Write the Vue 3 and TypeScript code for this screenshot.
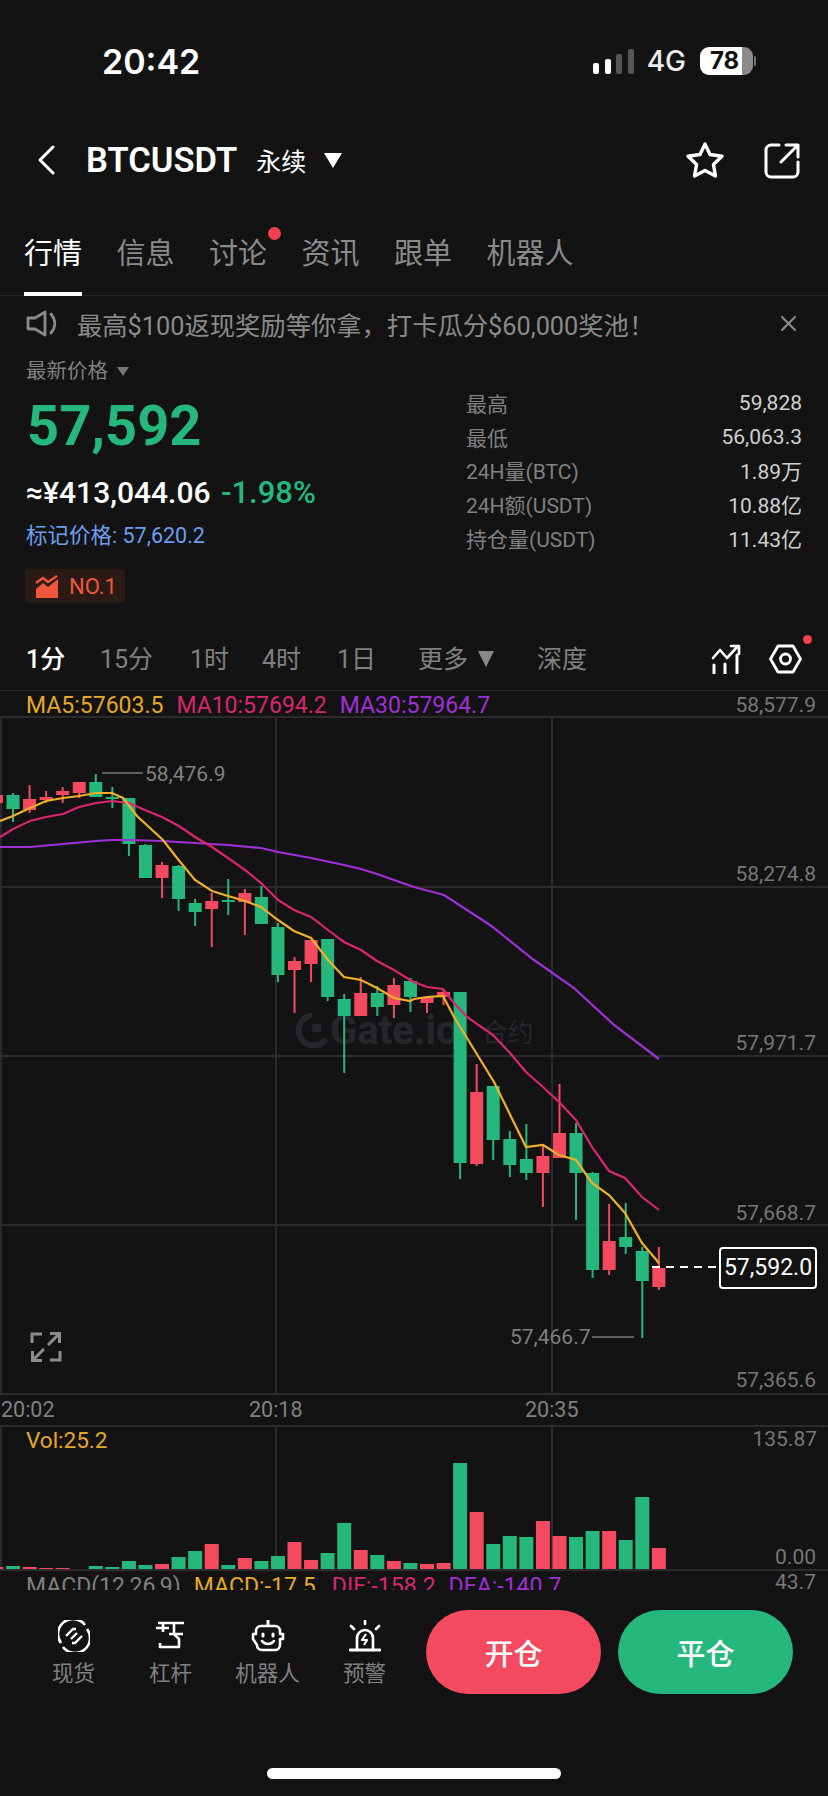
<template>
  <div class="screen">
    <div class="status">
      <span class="clock">20:42</span>
      <div class="status-right">
        <div class="signal">
          <i class="on" style="height: 11px"></i>
          <i class="on" style="height: 15px"></i>
          <i style="height: 20px"></i>
          <i style="height: 25px"></i>
        </div>
        <span class="net">4G</span>
        <div class="battery">78</div>
        <div class="nub"></div>
      </div>
    </div>

    <div class="header">
      <svg class="back" width="20" height="30" viewBox="0 0 20 30" fill="none">
        <path d="M17 2 L4 15 L17 28" stroke="#fff" stroke-width="3" stroke-linecap="round" stroke-linejoin="round" />
      </svg>
      <span class="symbol">BTCUSDT</span>
      <span class="kind">永续</span>
      <span class="tri tri-white"></span>
      <div class="header-actions">
        <svg width="40" height="38" viewBox="0 0 40 38" fill="none">
          <path d="M20 3 L25 13.5 L37 15.2 L28.4 23.4 L30.5 35 L20 29.4 L9.5 35 L11.6 23.4 L3 15.2 L15 13.5 Z" stroke="#fff" stroke-width="3.4" stroke-linejoin="round" />
        </svg>
        <svg width="36" height="37" viewBox="0 0 36 37" fill="none">
          <path d="M15 3 H7 A5 5 0 0 0 2 8 V30 A5 5 0 0 0 7 35 H29 A5 5 0 0 0 34 30 V20" stroke="#fff" stroke-width="3" stroke-linecap="round" />
          <path d="M17 20 L33 4 M22 3 H34 V15" stroke="#fff" stroke-width="3" stroke-linecap="round" stroke-linejoin="round" />
        </svg>
      </div>
    </div>

    <div class="tabs">
      <div v-for="(tab, i) in tabs" :key="tab" class="tab" :class="{ active: i === 0 }">
        {{ tab }}
        <span v-if="tab === '讨论'" class="tab-dot"></span>
      </div>
    </div>

    <div class="notice">
      <svg width="31" height="27" viewBox="0 0 31 27" fill="none">
        <path d="M2 8 H9 L19 2 V25 L9 19 H2 Z" stroke="#8a8a8a" stroke-width="2.8" stroke-linejoin="round" />
        <path d="M25 4 C30 10 30 17 25 23" stroke="#8a8a8a" stroke-width="2.8" stroke-linecap="round" />
      </svg>
      <span class="notice-text">最高$100返现奖励等你拿，打卡瓜分$60,000奖池！</span>
      <svg class="close" width="17" height="17" viewBox="0 0 17 17" fill="none">
        <path d="M2 2 L15 15 M15 2 L2 15" stroke="#8a8a8a" stroke-width="2.2" stroke-linecap="round" />
      </svg>
    </div>

    <div class="market">
      <div class="market-left">
        <div class="latest-label">最新价格 <span class="tri tri-small"></span></div>
        <div class="last-price">57,592</div>
        <div class="cny">≈¥413,044.06 <span class="change">-1.98%</span></div>
        <div class="mark-price">标记价格: 57,620.2</div>
        <div class="rank">
          <svg width="24" height="23" viewBox="0 0 24 23">
            <path d="M1 14 L8 8 L13 12 L23 4 V23 H1 Z" fill="#f0573a" />
            <path d="M1 8 L8 3 L13 7 L22 1" fill="none" stroke="#f0573a" stroke-width="2.4" />
          </svg>
          <span>NO.1</span>
        </div>
      </div>
      <div class="market-right">
        <div v-for="row in stats" :key="row[0]" class="stat">
          <span class="stat-label">{{ row[0] }}</span>
          <span class="stat-value">{{ row[1] }}</span>
        </div>
      </div>
    </div>

    <div class="intervals">
      <span class="iv active" style="width: 74px">1分</span>
      <span class="iv" style="width: 90px">15分</span>
      <span class="iv" style="width: 72px">1时</span>
      <span class="iv" style="width: 75px">4时</span>
      <span class="iv" style="width: 81px">1日</span>
      <span class="iv">更多</span>
      <span class="tri tri-gray"></span>
      <span class="iv depth">深度</span>
      <div class="iv-icons">
        <svg width="30" height="30" viewBox="0 0 30 30" fill="none">
          <path d="M2 14 L9 6 L16 14 L27 2 M20 2 H28 V10" stroke="#fff" stroke-width="2.6" stroke-linejoin="round" stroke-linecap="round" />
          <path d="M3 21 V29 M14 20 V29 M26 11 V29" stroke="#fff" stroke-width="3" stroke-linecap="round" />
        </svg>
        <div class="gear">
          <svg width="33" height="30" viewBox="0 0 33 30" fill="none">
            <path d="M9 2 H24 L31.5 15 L24 28 H9 L1.5 15 Z" stroke="#fff" stroke-width="2.8" stroke-linejoin="round" />
            <circle cx="16.5" cy="15" r="5" stroke="#fff" stroke-width="2.8" />
          </svg>
          <span class="gear-dot"></span>
        </div>
      </div>
    </div>

    <div class="ma-row">
      <span class="ma5">MA5:57603.5</span>
      <span class="ma10">MA10:57694.2</span>
      <span class="ma30">MA30:57964.7</span>
      <span class="axis-top">58,577.9</span>
    </div>

    <div class="main-chart">
      <div class="watermark">
        <svg width="35" height="35" viewBox="0 0 35 35" fill="none">
          <path d="M31 26 A15 15 0 1 1 17.5 2.5" stroke="#25262b" stroke-width="6" />
          <path d="M17.5 11 V19 H26 V11 Z" fill="#25262b" />
        </svg>
        <span class="wm-name">Gate.io</span>
        <span class="wm-kind">合约</span>
      </div>
      <svg class="plot" width="828" height="675" viewBox="0 718 828 675">
        <line v-for="y in [887, 1056, 1225]" :key="y" x1="0" x2="828" :y1="y" :y2="y" class="grid" />
        <line v-for="x in [1, 276, 552]" :key="x" :x1="x" :x2="x" y1="718" y2="1393" class="grid" />
        <g v-for="c in candleBars" :key="c.x">
          <rect :x="c.x - 1" :y="c.high" width="2" :height="c.low - c.high" :fill="c.color" />
          <rect :x="c.x - 6.5" :y="c.top" width="13" :height="c.bottom - c.top" :fill="c.color" />
        </g>
        <polyline :points="ma30Points" fill="none" stroke="#a02fd6" stroke-width="2.2" />
        <polyline :points="ma10Points" fill="none" stroke="#d9266f" stroke-width="2.2" />
        <polyline :points="ma5Points" fill="none" stroke="#eeb02a" stroke-width="2.2" />
        <line x1="102" x2="143" y1="773" y2="773" class="marker" />
        <line x1="592" x2="634" y1="1337" y2="1337" class="marker" />
        <line x1="652" x2="719" y1="1267" y2="1267" stroke="#fff" stroke-width="2" stroke-dasharray="8 6" />
      </svg>
      <span v-for="a in axisLabels" :key="a.text" class="axis" :style="{ top: a.top + 'px' }">{{ a.text }}</span>
      <span class="hl high-label">58,476.9</span>
      <span class="hl low-label">57,466.7</span>
      <div class="now-price">57,592.0</div>
      <svg class="expand" width="32" height="32" viewBox="0 0 32 32" fill="none">
        <path d="M2 12 V3 H12 M20 29 H30 V20" stroke="#8d8d8d" stroke-width="3" />
        <path d="M18 14 L29 3 M20 2.5 H29.5 V12 M14 18 L3 29 M2.5 20 V29.5 H12" stroke="#8d8d8d" stroke-width="3" />
      </svg>
    </div>

    <div class="time-axis">
      <span class="t0">20:02</span>
      <span class="t1">20:18</span>
      <span class="t2">20:35</span>
    </div>

    <div class="vol-chart">
      <svg class="plot" width="828" height="142" viewBox="0 1427 828 142">
        <line v-for="x in [1, 276, 552]" :key="x" :x1="x" :x2="x" y1="1427" y2="1569" class="grid" />
        <rect v-for="b in volumeBars" :key="b.x" :x="b.x - 7" :y="b.top" width="14" :height="1569.5 - b.top" :fill="b.color" />
      </svg>
      <span class="vol-label">Vol:25.2</span>
      <span class="vol-max">135.87</span>
      <span class="vol-min">0.00</span>
    </div>

    <div class="macd-row">
      <span class="m-name">MACD(12,26,9)</span>
      <span class="m-macd">MACD:-17.5</span>
      <span class="m-dif">DIF:-158.2</span>
      <span class="m-dea">DEA:-140.7</span>
      <span class="m-val">43.7</span>
    </div>

    <div class="bottom">
      <div class="nav">
        <div class="nav-item">
          <svg width="32" height="32" viewBox="0 0 32 32" fill="none">
            <path d="M27 5 A15 15 0 0 0 3 23 M5 27 A15 15 0 0 0 29 9" stroke="#fff" stroke-width="2.6" />
            <path d="M8 16 L15 9 H18 M24 16 L17 23 H14 M13 19 L19 13" stroke="#fff" stroke-width="2.4" />
          </svg>
          <span>现货</span>
        </div>
        <div class="nav-item">
          <svg width="30" height="32" viewBox="0 0 30 32" fill="none">
            <path d="M2 3 H28 M7 3 V12 M0 8 H13 M18 3 V14 M13 14 H27" stroke="#fff" stroke-width="2.6" />
            <path d="M18 14 L23 19 V27 H4 V23" stroke="#fff" stroke-width="2.6" stroke-linejoin="round" />
          </svg>
          <span>杠杆</span>
        </div>
        <div class="nav-item">
          <svg width="34" height="32" viewBox="0 0 34 32" fill="none">
            <path d="M10 6 H24 A5 5 0 0 1 29 11 V14 H32 V19 H29 V25 A5 5 0 0 1 24 30 H11 C8 30 6 28 6 25 L2 19 V14 H5 V11 A5 5 0 0 1 10 6 Z" stroke="#fff" stroke-width="2.6" stroke-linejoin="round" />
            <path d="M17 1 V5" stroke="#fff" stroke-width="3" stroke-linecap="round" />
            <path d="M12 14 V16 M22 14 V16" stroke="#fff" stroke-width="3" stroke-linecap="round" />
            <path d="M11 21 C14 25 20 25 23 21" stroke="#fff" stroke-width="2.6" stroke-linecap="round" />
          </svg>
          <span>机器人</span>
        </div>
        <div class="nav-item">
          <svg width="32" height="32" viewBox="0 0 32 32" fill="none">
            <path d="M8 29 V18 A8 8 0 0 1 24 18 V29" stroke="#fff" stroke-width="2.6" />
            <path d="M1 30 H31" stroke="#fff" stroke-width="2.8" stroke-linecap="round" />
            <path d="M16 1 V4 M2 6 L5 9 M30 6 L27 9" stroke="#fff" stroke-width="2.6" stroke-linecap="round" />
            <path d="M17 14 L13 20 H18 L15 25" stroke="#fff" stroke-width="2.2" stroke-linejoin="round" />
          </svg>
          <span>预警</span>
        </div>
      </div>
      <div class="actions">
        <div class="btn open">开仓</div>
        <div class="btn close-pos">平仓</div>
      </div>
    </div>

    <div class="home-wrap"><div class="home"></div></div>
  </div>
</template>

<script setup lang="ts">
import { computed } from 'vue'

const UP = '#26b77c'
const DOWN = '#f44a60'
const STEP = 16.56

const tabs = ['行情', '信息', '讨论', '资讯', '跟单', '机器人']

const stats = [
  ['最高', '59,828'],
  ['最低', '56,063.3'],
  ['24H量(BTC)', '1.89万'],
  ['24H额(USDT)', '10.88亿'],
  ['持仓量(USDT)', '11.43亿']
]

// candle: up?, high, top, bottom, low in page pixels. First one is cut off by the left edge
const candles: [number, number, number, number, number][] = [
  [0, 795, 795, 803, 803], [1, 793, 795, 809, 822], [0, 785, 799, 810, 813], [0, 791, 797, 800, 803],
  [0, 787, 791, 795, 803], [0, 782, 782, 793, 798], [1, 774, 782, 797, 797], [1, 787, 797, 799, 808],
  [1, 798, 798, 844, 856], [1, 844, 845, 878, 878], [0, 862, 865, 878, 898], [1, 865, 866, 899, 911],
  [1, 899, 903, 912, 926], [0, 893, 901, 909, 947], [1, 879, 900, 902, 915], [0, 889, 893, 902, 935],
  [1, 886, 897, 924, 924], [1, 923, 927, 975, 982], [0, 957, 961, 970, 1013], [0, 940, 940, 964, 982],
  [1, 939, 939, 997, 1001], [1, 994, 999, 1016, 1073], [0, 977, 993, 1016, 1016], [1, 986, 993, 1007, 1016],
  [0, 978, 985, 1005, 1018], [1, 978, 981, 997, 1012], [0, 997, 997, 1003, 1013], [0, 990, 992, 997, 1005],
  [1, 992, 992, 1163, 1179], [0, 1064, 1092, 1164, 1166], [1, 1086, 1086, 1140, 1160], [1, 1131, 1139, 1165, 1177],
  [1, 1124, 1159, 1173, 1180], [0, 1145, 1156, 1173, 1207], [0, 1084, 1133, 1158, 1158], [1, 1123, 1133, 1173, 1220],
  [1, 1172, 1173, 1270, 1278], [0, 1204, 1241, 1270, 1275], [1, 1203, 1237, 1247, 1254], [1, 1247, 1251, 1281, 1338],
  [0, 1247, 1268, 1287, 1290]
]

const volumes: [number, number][] = [
  [0, 1567], [1, 1566], [0, 1567], [0, 1568], [0, 1568], [1, 1569], [1, 1566], [1, 1567], [1, 1561], [1, 1565],
  [0, 1564], [1, 1557], [1, 1551], [0, 1544], [1, 1565], [0, 1558], [1, 1561], [1, 1556], [0, 1542], [0, 1560],
  [1, 1553], [1, 1523], [0, 1550], [1, 1555], [0, 1561], [1, 1563], [0, 1564], [0, 1563], [1, 1463], [0, 1512],
  [1, 1544], [1, 1536], [1, 1537], [0, 1521], [0, 1536], [1, 1537], [1, 1531], [0, 1531], [1, 1540], [1, 1497],
  [0, 1548]
]

const ma5 = [
  0, 821, 13, 816, 30, 808, 46, 801, 63, 798, 79, 796, 96, 793, 112, 793, 123, 798, 137, 816, 163, 840, 177, 858,
  195, 880, 212, 891, 228, 896, 245, 901, 261, 907, 278, 920, 294, 931, 311, 938, 328, 960, 344, 977, 361, 980,
  377, 988, 394, 998, 410, 1001, 414, 999, 427, 997, 443, 996, 454, 1017, 467, 1038, 494, 1082, 526, 1147,
  543, 1145, 559, 1155, 576, 1160, 592, 1183, 609, 1195, 625, 1213, 642, 1243, 659, 1263
]
const ma10 = [
  0, 837, 13, 829, 30, 821, 46, 817, 63, 814, 79, 807, 96, 803, 112, 801, 129, 803, 145, 810, 162, 817, 179, 826,
  195, 837, 212, 847, 228, 858, 245, 870, 261, 883, 278, 900, 294, 910, 311, 917, 328, 930, 344, 942, 361, 950,
  377, 961, 394, 970, 410, 980, 414, 982, 427, 987, 443, 989, 454, 1003, 467, 1017, 493, 1035, 510, 1053, 526, 1072,
  543, 1087, 559, 1102, 576, 1120, 592, 1147, 609, 1171, 625, 1178, 642, 1197, 659, 1210
]
const ma30 = [
  0, 847, 13, 847, 30, 847, 63, 844, 96, 841, 112, 840, 129, 840, 162, 841, 195, 843, 228, 845, 261, 848, 278, 852,
  311, 858, 344, 865, 361, 869, 377, 874, 394, 880, 414, 887, 444, 895, 490, 925, 534, 960, 574, 988, 614, 1025, 659, 1059
]

const toPoints = (flat: number[]) => flat.join(' ')

const ma5Points = computed(() => toPoints(ma5))
const ma10Points = computed(() => toPoints(ma10))
const ma30Points = computed(() => toPoints(ma30))

const candleBars = computed(() =>
  candles.map(([up, high, top, bottom, low], i) => ({
    x: 13 + STEP * (i - 1),
    high,
    top,
    bottom,
    low,
    color: up ? UP : DOWN
  }))
)

const volumeBars = computed(() =>
  volumes.map(([up, top], i) => ({
    x: 13 + STEP * (i - 1),
    top,
    color: up ? UP : DOWN
  }))
)

const axisLabels = [
  { text: '58,274.8', top: 142 },
  { text: '57,971.7', top: 311 },
  { text: '57,668.7', top: 481 },
  { text: '57,365.6', top: 648 }
]
</script>

<style scoped>
.screen {
  width: 828px;
  height: 1796px;
  overflow: hidden;
  background: #131314;
  color: #fff;
  display: flex;
  flex-direction: column;
  font-family: Roboto, "Noto Sans CJK SC", sans-serif;
}

.status {
  height: 122px;
  flex: none;
  display: flex;
  align-items: center;
  justify-content: space-between;
  padding: 0 72px 0 102px;
}
.clock {
  font-family: Inter, sans-serif;
  font-size: 34px;
  font-weight: 600;
}
.status-right {
  display: flex;
  align-items: center;
}
.signal {
  display: flex;
  align-items: flex-end;
  gap: 5.5px;
  height: 26px;
}
.signal i {
  width: 6px;
  border-radius: 2px;
  background: #56565a;
}
.signal i.on {
  background: #fff;
}
.net {
  margin-left: 13px;
  font-family: Inter, sans-serif;
  font-size: 28px;
  font-weight: 500;
  color: #ececec;
}
.battery {
  margin-left: 14px;
  width: 53px;
  height: 28px;
  border-radius: 9px;
  background: linear-gradient(90deg, #fff 79%, #8a8a8a 79%);
  color: #111;
  font-family: Inter, sans-serif;
  font-size: 24px;
  font-weight: 700;
  line-height: 28px;
  padding-left: 10px;
  box-sizing: border-box;
}
.nub {
  width: 2px;
  height: 10px;
  margin-left: 1px;
  background: #777;
  border-radius: 0 2px 2px 0;
}

.header {
  height: 76px;
  flex: none;
  display: flex;
  align-items: center;
  padding-left: 36px;
}
.symbol {
  margin-left: 30px;
  font-size: 34.5px;
  font-weight: 600;
}
.kind {
  margin-left: 19px;
  font-size: 25px;
}
.tri {
  display: inline-block;
  width: 0;
  height: 0;
  border-style: solid;
  border-color: transparent;
}
.tri-white {
  margin-left: 18px;
  border-width: 15px 9px 0;
  border-top-color: #fff;
}
.tri-small {
  margin-left: 4px;
  vertical-align: 2px;
  border-width: 9px 6px 0;
  border-top-color: #777;
}
.tri-gray {
  margin: 0 0 0 10px;
  border-width: 16px 8.5px 0;
  border-top-color: #888;
}
.header-actions {
  margin-left: auto;
  margin-right: 28px;
  display: flex;
  align-items: center;
  gap: 39px;
}

.tabs {
  height: 98px;
  flex: none;
  box-sizing: border-box;
  display: flex;
  gap: 34.5px;
  padding: 36px 0 0 24px;
  border-bottom: 1px solid #232326;
}
.tab {
  position: relative;
  height: 62px;
  box-sizing: border-box;
  font-size: 29px;
  line-height: 40px;
  color: #8a8a8a;
}
.tab.active {
  color: #fff;
  border-bottom: 4px solid #fff;
}
.tab-dot {
  position: absolute;
  top: -7px;
  right: -14px;
  width: 13px;
  height: 13px;
  border-radius: 50%;
  background: #f4404f;
}

.notice {
  height: 55px;
  margin-bottom: 1px;
  flex: none;
  display: flex;
  align-items: center;
  padding: 0 31px 0 26px;
}
.notice-text {
  margin-left: 20px;
  font-size: 25.3px;
  color: #8a8a8a;
  white-space: nowrap;
}
.close {
  margin-left: auto;
}

.market {
  height: 278px;
  flex: none;
  display: flex;
  justify-content: space-between;
  padding: 0 26px 0 26px;
}
.latest-label {
  margin-top: 5px;
  font-size: 20.5px;
  line-height: 28px;
  color: #808080;
}
.last-price {
  margin-top: 11px;
  font-size: 56px;
  font-weight: 700;
  line-height: 60px;
  color: #26b77c;
  padding-left: 1px;
}
.cny {
  margin-top: 19px;
  font-size: 30px;
  font-weight: 500;
  line-height: 36px;
  white-space: nowrap;
}
.change {
  margin-left: 3px;
  color: #26b77c;
  font-size: 31px;
  font-weight: 500;
}
.mark-price {
  margin-top: 11px;
  font-size: 21.5px;
  line-height: 28px;
  color: #6c9eef;
}
.rank {
  margin-top: 19px;
  margin-left: -1px;
  width: 100px;
  height: 34px;
  box-sizing: border-box;
  display: flex;
  align-items: center;
  gap: 10px;
  padding-left: 10px;
  background: #2c1a17;
  border-radius: 4px;
  color: #f0573a;
  font-size: 22px;
}
.market-right {
  width: 336px;
  padding-top: 34px;
}
.stat {
  height: 33.7px;
  display: flex;
  align-items: center;
  justify-content: space-between;
  font-size: 21px;
}
.stat-label {
  color: #808080;
}
.stat-value {
  color: #d0d0d0;
}

.intervals {
  height: 61px;
  flex: none;
  box-sizing: border-box;
  display: flex;
  align-items: center;
  padding: 0 0 3px 26px;
  border-bottom: 1px solid #2b2b2e;
}
.iv {
  margin-bottom: 4px;
  font-size: 25px;
  color: #808080;
  white-space: nowrap;
}
.iv.active {
  color: #fff;
  font-weight: 500;
}
.iv.depth {
  margin-left: 43px;
}
.iv-icons {
  margin-left: auto;
  margin-right: 26px;
  display: flex;
  align-items: center;
  gap: 28px;
}
.gear {
  position: relative;
  display: flex;
}
.gear-dot {
  position: absolute;
  top: -9px;
  right: -10px;
  width: 9px;
  height: 9px;
  border-radius: 50%;
  background: #f4404f;
}

.ma-row {
  height: 27px;
  flex: none;
  box-sizing: border-box;
  display: flex;
  align-items: center;
  gap: 13px;
  padding: 4px 12px 0 26px;
  font-size: 23px;
  line-height: 21px;
  border-bottom: 2px solid #2b2b2e;
}
.ma5 {
  color: #e6a829;
}
.ma10 {
  color: #d9266f;
}
.ma30 {
  color: #a02fd6;
}
.axis-top {
  margin-left: auto;
  color: #777;
  font-size: 21px;
}

.main-chart {
  position: relative;
  height: 675px;
  flex: none;
  border-bottom: 2px solid #2b2b2e;
  box-sizing: content-box;
}
.plot {
  position: absolute;
  left: 0;
  top: 0;
}
.grid {
  stroke: #2b2b2e;
  stroke-width: 2;
}
.marker {
  stroke: #7a7a7a;
  stroke-width: 1.5;
}
.watermark {
  position: absolute;
  left: 295px;
  top: 289px;
  display: flex;
  align-items: center;
  color: #25262b;
}
.wm-name {
  font-size: 40px;
  font-weight: 700;
}
.wm-kind {
  margin-left: 23px;
  font-size: 26px;
}
.axis {
  position: absolute;
  right: 12px;
  font-size: 21px;
  line-height: 28px;
  color: #777;
}
.hl {
  position: absolute;
  font-size: 21px;
  line-height: 28px;
  color: #808080;
}
.high-label {
  left: 145px;
  top: 42px;
}
.low-label {
  left: 510px;
  top: 605px;
}
.now-price {
  position: absolute;
  left: 719px;
  top: 529px;
  width: 98px;
  height: 42px;
  box-sizing: border-box;
  border: 2px solid #fff;
  border-radius: 4px;
  background: #131314;
  font-size: 23px;
  line-height: 38px;
  text-align: center;
}
.expand {
  position: absolute;
  left: 30px;
  top: 613px;
}

.time-axis {
  position: relative;
  height: 32px;
  flex: none;
  box-sizing: border-box;
  border-bottom: 2px solid #2b2b2e;
  font-size: 21.5px;
  color: #808080;
}
.time-axis span {
  position: absolute;
  top: 1px;
  line-height: 28px;
}
.t0 {
  left: 1px;
}
.t1 {
  left: 249px;
}
.t2 {
  left: 525px;
}

.vol-chart {
  position: relative;
  height: 144px;
  flex: none;
  box-sizing: border-box;
  border-bottom: 2px solid #2b2b2e;
  font-size: 21px;
}
.vol-label {
  position: absolute;
  left: 26px;
  top: -1px;
  font-size: 22.5px;
  line-height: 28px;
  color: #e6a829;
}
.vol-max {
  position: absolute;
  right: 11px;
  top: -2px;
  line-height: 28px;
  color: #777;
}
.vol-min {
  position: absolute;
  right: 12px;
  top: 116px;
  line-height: 28px;
  color: #777;
}

.macd-row {
  height: 19px;
  flex: none;
  overflow: hidden;
  display: flex;
  align-items: flex-start;
  gap: 13px;
  padding: 2px 12px 0 26px;
  box-sizing: border-box;
  font-size: 23px;
  line-height: 28px;
}
.m-name {
  color: #808080;
}
.m-macd {
  color: #e6a829;
}
.m-dif {
  color: #d9266f;
  margin-left: 3px;
}
.m-dea {
  color: #a02fd6;
}
.m-val {
  margin-left: auto;
  color: #777;
  font-size: 21px;
  line-height: 18px;
}

.bottom {
  flex: none;
  height: 178px;
  box-sizing: border-box;
  display: flex;
  padding-top: 20px;
}
.nav {
  width: 426px;
  display: flex;
  padding: 10px 0 0 25px;
  box-sizing: border-box;
}
.nav-item {
  width: 97px;
  display: flex;
  flex-direction: column;
  align-items: center;
  gap: 8px;
  font-size: 21.5px;
  line-height: 28px;
  color: #808080;
}
.actions {
  display: flex;
  gap: 17px;
}
.btn {
  width: 175px;
  height: 84px;
  border-radius: 42px;
  display: flex;
  align-items: center;
  justify-content: center;
  font-size: 29px;
  font-weight: 500;
}
.btn.open {
  background: #f44a60;
}
.btn.close-pos {
  background: #26b77c;
}

.home-wrap {
  flex: 1;
  display: flex;
  justify-content: center;
}
.home {
  width: 294px;
  height: 11px;
  border-radius: 6px;
  background: #fff;
}
</style>
